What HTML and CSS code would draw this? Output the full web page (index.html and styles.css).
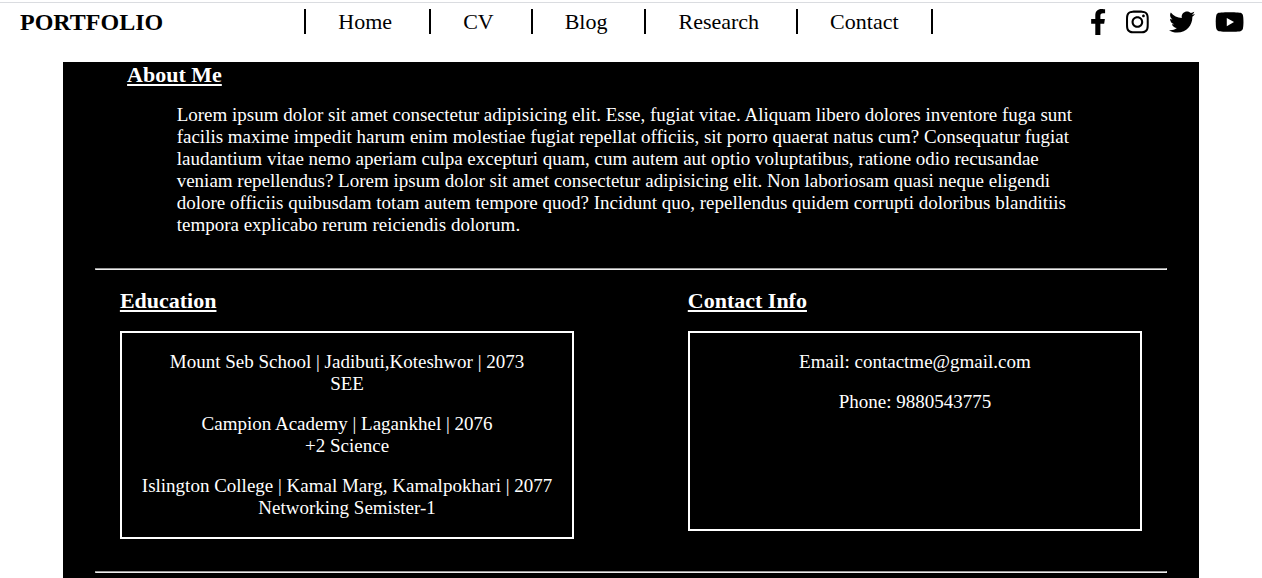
FILE: index.html
```html
<!DOCTYPE html>
<html lang="en">
<head>
<meta charset="utf-8">
<title>Portfolio</title>
<link rel="stylesheet" href="styles.css">
</head>
<body>
<header class="header">
  <div class="logo">PORTFOLIO</div>
  <nav>
    <ul class="menu">
      <li><a href="#home">Home</a></li>
      <li><a href="#cv">CV</a></li>
      <li><a href="#blog">Blog</a></li>
      <li><a href="#research">Research</a></li>
      <li><a href="#contact">Contact</a></li>
    </ul>
  </nav>
  <div class="social">
    <a href="#facebook" aria-label="Facebook"><svg viewBox="0 0 320 512"><path d="M279.14 288l14.22-92.66h-88.91v-60.13c0-25.35 12.42-50.06 52.24-50.06h40.42V6.26S260.43 0 225.36 0c-73.22 0-121.08 44.38-121.08 124.72v70.62H22.89V288h81.39v224h100.17V288z"/></svg></a>
    <a href="#instagram" aria-label="Instagram"><svg viewBox="0 0 448 512"><path d="M224.1 141c-63.6 0-114.9 51.3-114.9 114.9s51.3 114.9 114.9 114.9S339 319.5 339 255.900 287.700 141 224.100 141zm0 189.600c-41.100 0-74.700-33.500-74.700-74.700s33.500-74.700 74.700-74.700 74.700 33.500 74.700 74.700-33.600 74.700-74.700 74.700zm146.400-194.300c0 14.900-12 26.800-26.800 26.800-14.900 0-26.800-12-26.800-26.800s12-26.800 26.800-26.800 26.800 12 26.800 26.800zm76.100 27.200c-1.700-35.900-9.900-67.700-36.200-93.900-26.200-26.200-58-34.400-93.900-36.200-37-2.100-147.900-2.100-184.900 0-35.800 1.700-67.600 9.900-93.900 36.100s-34.400 58-36.200 93.900c-2.100 37-2.100 147.900 0 184.900 1.700 35.900 9.900 67.700 36.200 93.900s58 34.400 93.900 36.200c37 2.100 147.900 2.100 184.900 0 35.900-1.700 67.700-9.900 93.900-36.200 26.200-26.200 34.400-58 36.200-93.900 2.100-37 2.100-147.800 0-184.800zM398.800 388c-7.800 19.600-22.900 34.700-42.600 42.600-29.500 11.700-99.500 9-132.100 9s-102.700 2.600-132.100-9c-19.600-7.800-34.700-22.900-42.600-42.600-11.700-29.500-9-99.500-9-132.100s-2.600-102.700 9-132.100c7.800-19.600 22.900-34.700 42.600-42.600 29.500-11.700 99.500-9 132.100-9s102.700-2.600 132.100 9c19.600 7.800 34.700 22.900 42.600 42.600 11.700 29.500 9 99.500 9 132.100s2.700 102.700-9 132.100z"/></svg></a>
    <a href="#twitter" aria-label="Twitter"><svg viewBox="0 0 512 512"><path d="M459.37 151.716c.325 4.548.325 9.097.325 13.645 0 138.72-105.583 298.558-298.558 298.558-59.452 0-114.680-17.219-161.137-47.106 8.447.974 16.568 1.299 25.340 1.299 49.055 0 94.213-16.568 130.274-44.832-46.132-.975-84.792-31.188-98.112-72.772 6.498.974 12.995 1.624 19.818 1.624 9.421 0 18.843-1.300 27.614-3.573-48.081-9.747-84.143-51.980-84.143-102.985v-1.299c13.969 7.797 30.214 12.670 47.431 13.319-28.264-18.843-46.781-51.005-46.781-87.391 0-19.492 5.197-37.360 14.294-52.954 51.655 63.675 129.300 105.258 216.365 109.807-1.624-7.797-2.599-15.918-2.599-24.040 0-57.828 46.782-104.934 104.934-104.934 30.213 0 57.502 12.670 76.670 33.137 23.715-4.548 46.456-13.320 66.599-25.340-7.798 24.366-24.366 44.833-46.132 57.827 21.117-2.273 41.584-8.122 60.426-16.243-14.292 20.791-32.161 39.308-52.628 54.253z"/></svg></a>
    <a href="#youtube" aria-label="YouTube"><svg viewBox="0 0 576 512"><path d="M549.655 124.083c-6.281-23.650-24.787-42.276-48.284-48.597C458.781 64 288 64 288 64S117.220 64 74.629 75.486c-23.497 6.322-42.003 24.947-48.284 48.597-11.412 42.867-11.412 132.305-11.412 132.305s0 89.438 11.412 132.305c6.281 23.650 24.787 41.500 48.284 47.821C117.220 448 288 448 288 448s170.780 0 213.371-11.486c23.497-6.321 42.003-24.171 48.284-47.821 11.412-42.867 11.412-132.305 11.412-132.305s0-89.438-11.412-132.305zm-317.510 213.508V175.185l142.739 81.205-142.739 81.201z"/></svg></a>
  </div>
</header>
<main class="content">
  <section class="about">
    <h2 class="about-title">About Me</h2>
    <p class="about-text">Lorem ipsum dolor sit amet consectetur adipisicing elit. Esse, fugiat vitae. Aliquam libero dolores inventore fuga sunt facilis maxime impedit harum enim molestiae fugiat repellat officiis, sit porro quaerat natus cum? Consequatur fugiat laudantium vitae nemo aperiam culpa excepturi quam, cum autem aut optio voluptatibus, ratione odio recusandae veniam repellendus? Lorem ipsum dolor sit amet consectetur adipisicing elit. Non laboriosam quasi neque eligendi dolore officiis quibusdam totam autem tempore quod? Incidunt quo, repellendus quidem corrupti doloribus blanditiis tempora explicabo rerum reiciendis dolorum.</p>
  </section>
  <hr class="rule">
  <div class="columns">
    <section class="column">
      <h2>Education</h2>
      <div class="box">
        <p>Mount Seb School | Jadibuti,Koteshwor | 2073<br>SEE</p>
        <p>Campion Academy | Lagankhel | 2076<br>+2 Science</p>
        <p>Islington College | Kamal Marg, Kamalpokhari | 2077<br>Networking Semister-1</p>
      </div>
    </section>
    <section class="column">
      <h2>Contact Info</h2>
      <div class="box box-contact">
        <p>Email: contactme@gmail.com</p>
        <p>Phone: 9880543775</p>
      </div>
    </section>
  </div>
  <hr class="rule rule-last">
</main>
</body>
</html>
```
FILE: styles.css
```css
* {
  box-sizing: border-box;
}

body {
  display: flex;
  flex-direction: column;
  min-height: 100vh;
  margin: 0;
  padding-top: 2px;
  background: #fff;
  color: #000;
  font-family: "Liberation Serif", "Times New Roman", serif;
  font-size: 19px;
  line-height: 22px;
}

h2, p, ul {
  margin: 0;
  padding: 0;
}

.header {
  display: flex;
  justify-content: space-between;
  align-items: flex-start;
  min-height: 60px;
  padding: 6px 18px 0 20px;
  border-top: 1px solid #dadce0;
}

.logo {
  font-size: 24px;
  font-weight: bold;
  line-height: 26px;
}

.menu {
  display: flex;
  list-style: none;
  font-size: 22px;
  line-height: 25px;
}

.menu li {
  padding: 0 37px 0 32px;
  border-right: 2px solid #000;
}

.menu li:first-child {
  border-left: 2px solid #000;
}

.menu li:last-child {
  padding-right: 32px;
}

.menu a {
  color: inherit;
  text-decoration: none;
}

.social {
  display: flex;
  gap: 20px;
  padding-left: 16px;
}

.social svg {
  display: block;
  height: 26px;
  fill: #000;
}

.content {
  flex: 1;
  margin: 0 5%;
  background: #000;
  color: #fff;
}

h2 {
  font-size: 22px;
  line-height: 26px;
  text-decoration: underline;
}

.about-title {
  padding-left: 64px;
}

.about-text {
  padding: 16px 10% 0;
}

.rule {
  margin: 32px;
  border: 1px solid #eee;
  border-color: #9a9a9a #eee #eee #9a9a9a;
}

.rule-last {
  margin-bottom: 4px;
}

.columns {
  display: grid;
  grid-template-columns: 1fr 1fr;
  align-items: start;
  margin-top: -14px;
}

.column {
  padding: 0 10%;
}

.column h2 {
  margin-bottom: 17px;
}

.box {
  display: flex;
  flex-direction: column;
  gap: 18px;
  padding: 18px 0;
  border: 2px solid #fff;
  text-align: center;
}

.box-contact {
  min-height: 200px;
}
```
